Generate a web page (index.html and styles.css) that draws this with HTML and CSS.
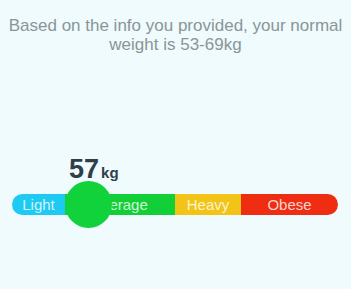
FILE: index.html
```html
<!DOCTYPE html>
<html lang="en">
<head>
  <meta charset="UTF-8" />
  <title>Normal weight</title>
  <link rel="stylesheet" href="styles.css">
</head>
<body>
  <div class="screen">
    <p class="summary">Based on the info you provided, your normal weight is 53-69kg</p>

    <div class="gauge">
      <div class="bar">
        <span class="seg light">Light</span>
        <span class="seg average">Average</span>
        <span class="seg heavy">Heavy</span>
        <span class="seg obese">Obese</span>
      </div>
      <!-- thumb sits over the bar at the current weight -->
      <div class="thumb" style="left: 65px;">
        <div class="value">57<small>kg</small></div>
        <div class="knob"></div>
      </div>
    </div>
  </div>
</body>
</html>
```

FILE: styles.css
```css
body {
  margin: 0;
  background: #effbfd;
  font-family: 'Liberation Sans', Arial, sans-serif;
}
.screen {
  width: 351px;
  height: 289px;
  box-sizing: border-box;
  padding-top: 16px;
}
.summary {
  margin: 0 auto;
  width: 345px;
  text-align: center;
  font-size: 17px;
  line-height: 19px;
  color: #8a9598;
}
.gauge {
  position: relative;
  margin-top: 140px;
  padding: 0 13px 0 12px;
}
.bar {
  display: flex;
  height: 21px;
  border-radius: 11px;
  overflow: hidden;
}
.seg {
  display: flex;
  align-items: center;
  justify-content: center;
  font-size: 15px;
  color: rgba(255,255,255,0.8);
}
.light { width: 53px; background: #1ec9f2; }
.average { width: 110px; background: #12cf38; }
.heavy { width: 66px; background: #f2c417; }
.obese { flex: 1; background: #ee2d12; }
.thumb {
  position: absolute;
  top: -13px;
  width: 47px;
}
.knob {
  width: 47px;
  height: 47px;
  border-radius: 50%;
  background: #12d23c;
}
.value {
  position: absolute;
  bottom: 100%;
  left: 4px;
  margin-bottom: -4px;
  white-space: nowrap;
  font-size: 27px;
  font-weight: bold;
  color: #2e3e4a;
}
.value small {
  font-size: 15px;
  margin-left: 2px;
}
```
